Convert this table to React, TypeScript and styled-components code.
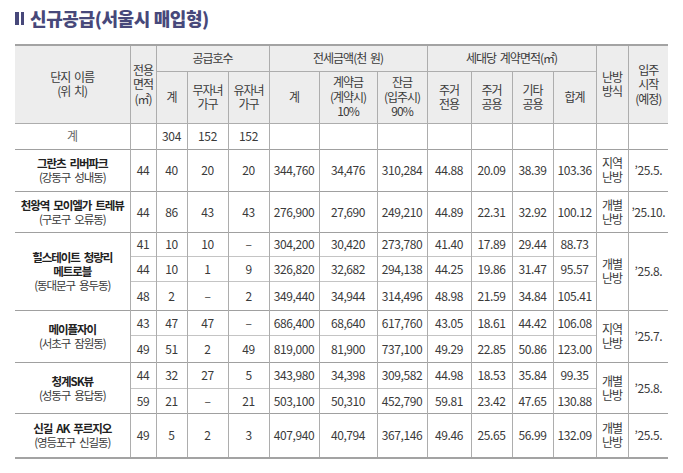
import React from "react";
import styled, { createGlobalStyle } from "styled-components";

const Global = createGlobalStyle`
  html, body { margin: 0; padding: 0; background: #ffffff; }
  body { font-family: "Noto Sans CJK KR", "Noto Sans", sans-serif; color: #333; }
`;

const Page = styled.div`
  width: 683px;
  height: 473px;
  padding: 7px 15px 0 15px;
  box-sizing: border-box;
  display: flex;
  flex-direction: column;
  gap: 14px;
`;

const Title = styled.h1`
  margin: 0;
  font-size: 18px;
  line-height: 23px;
  font-weight: 900;
  color: #47487a;
  letter-spacing: -0.4px;
  display: flex;
  align-items: center;
  gap: 6px;
`;

const Bars = styled.span`
  display: inline-flex;
  gap: 2px;
  align-items: center;
  height: 14px;
  & > i {
    display: block;
    width: 3.5px;
    height: 13px;
    background: #47487a;
  }
`;

const Table = styled.table`
  width: 653px;
  border-collapse: collapse;
  table-layout: fixed;
  border-top: 2px solid #a3a3a3;
  border-bottom: 2px solid #a3a3a3;
`;

const HeadRow = styled.tr<{ $h: number }>`
  height: ${(p) => p.$h}px;
  background: #ededed;
`;

const Th = styled.th<{ $bl?: boolean }>`
  font-weight: 400;
  font-size: 12px;
  line-height: 14.5px;
  color: #3a3a3a;
  letter-spacing: -1px;
  word-spacing: 2px;
  padding: 0;
  text-align: center;
  vertical-align: middle;
  border-left: ${(p) => (p.$bl === false ? "none" : "1px solid #adadad")};
  border-bottom: 1px solid #adadad;
  white-space: nowrap;
`;

const Row = styled.tr<{ $h: number; $group?: boolean }>`
  height: ${(p) => p.$h}px;
  & > td {
    border-top: ${(p) => (p.$group ? "1px solid #a0a0a0" : "1px solid #c4c4c4")};
  }
`;

const Td = styled.td<{ $first?: boolean; $muted?: boolean }>`
  font-size: 12px;
  line-height: 14px;
  color: ${(p) => (p.$muted ? "#666" : "#3a3a3a")};
  letter-spacing: -0.4px;
  padding: 0;
  text-align: center;
  vertical-align: middle;
  border-left: ${(p) => (p.$first ? "none" : "1px solid #adadad")};
  white-space: nowrap;
`;

const NameCell = styled(Td)`
  font-size: 11.5px;
  letter-spacing: -1.1px;
  word-spacing: 2.5px;
`;

const Name = styled.div`
  font-weight: 700;
  color: #222;
  line-height: 14px;
`;

const Loc = styled.div`
  color: #3a3a3a;
  line-height: 14px;
`;

const Heat = styled(Td)`
  letter-spacing: -1px;
  line-height: 14px;
`;

const widths = [115, 26, 31, 41, 41, 50, 58, 50, 44, 41, 41, 43, 32, 40];

type Sub = { h: number; v: string[] };
type Group = {
  name: string[];
  loc: string;
  heat: string;
  date: string;
  rows: Sub[];
};

const groups: Group[] = [
  {
    name: ["그란츠 리버파크"],
    loc: "(강동구 성내동)",
    heat: "지역\n난방",
    date: "’25.5.",
    rows: [
      { h: 42, v: ["44", "40", "20", "20", "344,760", "34,476", "310,284", "44.88", "20.09", "38.39", "103.36"] },
    ],
  },
  {
    name: ["천왕역 모이엘가 트레뷰"],
    loc: "(구로구 오류동)",
    heat: "개별\n난방",
    date: "’25.10.",
    rows: [
      { h: 41, v: ["44", "86", "43", "43", "276,900", "27,690", "249,210", "44.89", "22.31", "32.92", "100.12"] },
    ],
  },
  {
    name: ["힐스테이트 청량리", "메트로블"],
    loc: "(동대문구 용두동)",
    heat: "개별\n난방",
    date: "’25.8.",
    rows: [
      { h: 24, v: ["41", "10", "10", "–", "304,200", "30,420", "273,780", "41.40", "17.89", "29.44", "88.73"] },
      { h: 25, v: ["44", "10", "1", "9", "326,820", "32,682", "294,138", "44.25", "19.86", "31.47", "95.57"] },
      { h: 29, v: ["48", "2", "–", "2", "349,440", "34,944", "314,496", "48.98", "21.59", "34.84", "105.41"] },
    ],
  },
  {
    name: ["메이플자이"],
    loc: "(서초구 잠원동)",
    heat: "지역\n난방",
    date: "’25.7.",
    rows: [
      { h: 25, v: ["43", "47", "47", "–", "686,400", "68,640", "617,760", "43.05", "18.61", "44.42", "106.08"] },
      { h: 27, v: ["49", "51", "2", "49", "819,000", "81,900", "737,100", "49.29", "22.85", "50.86", "123.00"] },
    ],
  },
  {
    name: ["청계SK뷰"],
    loc: "(성동구 용답동)",
    heat: "개별\n난방",
    date: "’25.8.",
    rows: [
      { h: 26, v: ["44", "32", "27", "5", "343,980", "34,398", "309,582", "44.98", "18.53", "35.84", "99.35"] },
      { h: 25, v: ["59", "21", "–", "21", "503,100", "50,310", "452,790", "59.81", "23.42", "47.65", "130.88"] },
    ],
  },
  {
    name: ["신길 AK 푸르지오"],
    loc: "(영등포구 신길동)",
    heat: "개별\n난방",
    date: "’25.5.",
    rows: [
      { h: 45, v: ["49", "5", "2", "3", "407,940", "40,794", "367,146", "49.46", "25.65", "56.99", "132.09"] },
    ],
  },
];

const Lines = ({ text }: { text: string }) => (
  <>
    {text.split("\n").map((t, i) => (
      <div key={i}>{t}</div>
    ))}
  </>
);

export default function App() {
  return (
    <>
      <Global />
      <Page>
        <Title>
          <Bars>
            <i />
            <i />
          </Bars>
          신규공급(서울시 매입형)
        </Title>
        <Table>
          <colgroup>
            {widths.map((w, i) => (
              <col key={i} style={{ width: w }} />
            ))}
          </colgroup>
          <thead>
            <HeadRow $h={26}>
              <Th rowSpan={2} $bl={false}>
                <Lines text={"단지 이름\n(위 치)"} />
              </Th>
              <Th rowSpan={2}>
                <Lines text={"전용\n면적\n(㎡)"} />
              </Th>
              <Th colSpan={3}>공급호수</Th>
              <Th colSpan={3}>전세금액(천 원)</Th>
              <Th colSpan={4}>세대당 계약면적(㎡)</Th>
              <Th rowSpan={2}>
                <Lines text={"난방\n방식"} />
              </Th>
              <Th rowSpan={2}>
                <Lines text={"입주\n시작\n(예정)"} />
              </Th>
            </HeadRow>
            <HeadRow $h={52}>
              <Th>계</Th>
              <Th>
                <Lines text={"무자녀\n가구"} />
              </Th>
              <Th>
                <Lines text={"유자녀\n가구"} />
              </Th>
              <Th>계</Th>
              <Th>
                <Lines text={"계약금\n(계약시)\n10%"} />
              </Th>
              <Th>
                <Lines text={"잔금\n(입주시)\n90%"} />
              </Th>
              <Th>
                <Lines text={"주거\n전용"} />
              </Th>
              <Th>
                <Lines text={"주거\n공용"} />
              </Th>
              <Th>
                <Lines text={"기타\n공용"} />
              </Th>
              <Th>합계</Th>
            </HeadRow>
          </thead>
          <tbody>
            <Row $h={26} $group>
              <Td $first $muted>
                계
              </Td>
              <Td />
              <Td>304</Td>
              <Td>152</Td>
              <Td>152</Td>
              {Array.from({ length: 9 }).map((_, i) => (
                <Td key={i} />
              ))}
            </Row>
            {groups.map((g, gi) =>
              g.rows.map((r, ri) => (
                <Row key={`${gi}-${ri}`} $h={r.h} $group={ri === 0}>
                  {ri === 0 && (
                    <NameCell $first rowSpan={g.rows.length}>
                      {g.name.map((n, ni) => (
                        <Name key={ni}>{n}</Name>
                      ))}
                      <Loc>{g.loc}</Loc>
                    </NameCell>
                  )}
                  {r.v.map((v, vi) => (
                    <Td key={vi}>{v}</Td>
                  ))}
                  {ri === 0 && (
                    <>
                      <Heat rowSpan={g.rows.length}>
                        <Lines text={g.heat} />
                      </Heat>
                      <Td rowSpan={g.rows.length}>{g.date}</Td>
                    </>
                  )}
                </Row>
              ))
            )}
          </tbody>
        </Table>
      </Page>
    </>
  );
}
